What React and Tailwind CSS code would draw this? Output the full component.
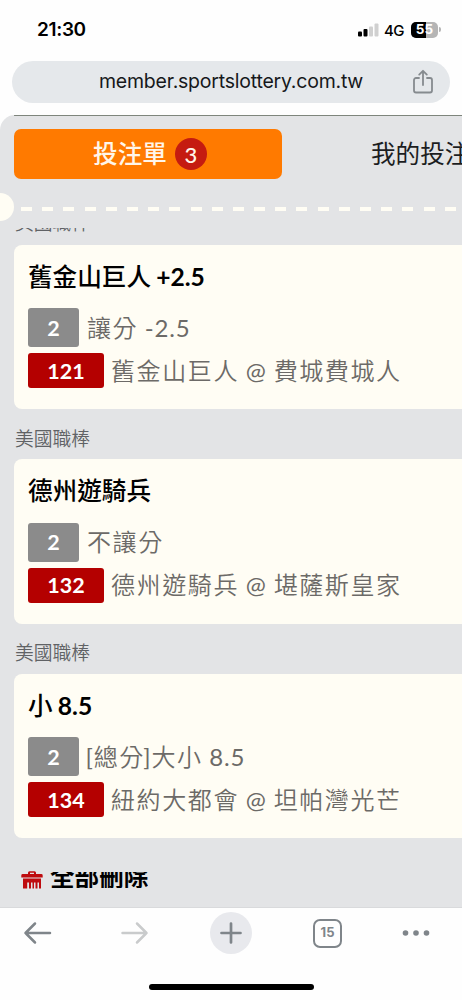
const bets = [
    { league: "美國職棒", title: "舊金山巨人 +2.5", type: "讓分 -2.5", code: "121", match: "舊金山巨人 @ 費城費城人" },
    { league: "美國職棒", title: "德州遊騎兵", type: "不讓分", code: "132", match: "德州遊騎兵 @ 堪薩斯皇家" },
    { league: "美國職棒", title: "小 8.5", type: "[總分]大小 8.5", code: "134", match: "紐約大都會 @ 坦帕灣光芒" },
];

// Latin runs take their own weight, the Chinese keeps the parent's
const MixedText = ({ text, latin }) =>
    text.split(/([\x21-\x7e]+)/).map((part, i) =>
        i % 2 ? (
            <span key={i} className={latin}>
                {part}
            </span>
        ) : (
            part
        )
    );

const StatusBar = () => (
    <div className="h-[61px] flex justify-between pl-[37px] pr-[21px] shrink-0 font-['Inter',sans-serif] text-black">
        <div className="mt-[17px] text-[19px] leading-[26px] font-semibold tracking-[-0.35px]">21:30</div>
        <div className="mt-[17px] h-[26px] flex items-center">
            <svg width="21" height="14" viewBox="0 0 21 14" className="-mt-px">
                <rect x="0" y="8.5" width="4" height="5" rx="1" fill="#000" />
                <rect x="5.500" y="6" width="4" height="7.500" rx="1" fill="#000" />
                <rect x="11" y="3.500" width="4" height="10" rx="1" fill="#d0d0d0" />
                <rect x="16.500" y="0.500" width="4" height="13" rx="1" fill="#d0d0d0" />
            </svg>
            <span className="ml-[5px] w-[21px] text-[15px] leading-none tracking-[-0.5px] font-medium">4G</span>
            <div className="relative ml-[6px] w-[27px] h-[16px] -mt-px rounded-[5px] overflow-hidden bg-[#b5b5b5] flex items-center justify-center">
                <div className="absolute left-0 top-0 w-[15px] h-full bg-black" />
                <span className="relative text-[13.5px] leading-none font-bold text-white">55</span>
            </div>
            <div className="ml-px -mt-px w-[2px] h-[5px] rounded-r-full bg-[#b5b5b5]" />
        </div>
    </div>
);

const AddressBar = () => (
    <div className="mx-3 h-[42px] shrink-0 rounded-full bg-[#e5e8eb] flex items-center pl-[87px] pr-[16px] justify-between">
        <span className="font-['Inter',sans-serif] text-[19.5px] tracking-[-0.22px] leading-none text-[#16181b] whitespace-nowrap">
            member.sportslottery.com.tw
        </span>
        <svg width="22" height="26" viewBox="0 0 22 26" fill="none" stroke="#868b8f" strokeWidth="1.8" strokeLinecap="round" strokeLinejoin="round">
            <path d="M7 9H4a2 2 0 0 0-2 2v10.500a2 2 0 0 0 2 2h14a2 2 0 0 0 2-2V11a2 2 0 0 0-2-2h-3" />
            <path d="M11 16V2.200M7.200 5.600L11 1.800l3.800 3.800" />
        </svg>
    </div>
);

const BetCard = ({ bet }) => (
    <>
        <div className="h-[49.7px] pt-[19.5px] first:pt-[17.5px] pl-px text-[18.8px] leading-[20px] text-[#606265] whitespace-nowrap font-[350]">{bet.league}</div>
        <div className="h-[164.8px] rounded-l-[8px] bg-[#fffdf4] pl-[14px] whitespace-nowrap">
            <div className="pt-[16px] h-[63px] text-[24.6px] leading-[32px] font-medium text-black">
                <MixedText text={bet.title} latin="font-bold -ml-px" />
            </div>
            <div className="flex items-center h-[40px]">
                <span className="w-[51px] h-[39px] rounded-[3px] bg-[#8b8b8b] text-white text-[21.5px] font-bold flex items-center justify-center">2</span>
                <span className="ml-[8px] text-[24px] tracking-[1.6px] leading-none font-[350] text-[#6c6a67]">
                    <MixedText text={bet.type} latin="font-normal tracking-[0.8px] -ml-[1.5px]" />
                </span>
            </div>
            <div className="flex items-center mt-[5px] h-[36px]">
                <span className="w-[76px] h-[35px] rounded-[3px] bg-[#b40000] text-white text-[21.5px] font-bold flex items-center justify-center">{bet.code}</span>
                <span className="ml-[7px] text-[24px] tracking-[1.6px] leading-none font-[350] text-[#6c6a67]">
                    <MixedText text={bet.match} latin="font-normal tracking-[-0.2px] -ml-[1.5px]" />
                </span>
            </div>
        </div>
    </>
);

const BetSlip = () => (
    <main className="h-[792px] shrink-0 overflow-hidden rounded-tl-[15px] bg-[#e3e4e6] flex flex-col font-['Lato','Noto_Sans_CJK_TC',sans-serif]">
        <div className="h-px shrink-0 ml-[14px] bg-[#7e857c]" />
        <div className="flex mt-[13px] ml-[14px] h-[50px] shrink-0 whitespace-nowrap text-[24.6px]">
            <div className="w-[268px] shrink-0 rounded-[7px] bg-[#ff7a00] flex items-center justify-center font-medium text-[#fff6ea]">
                <span className="leading-none">投注單</span>
                <span className="ml-[8px] mr-[-4px] w-[32px] h-[32px] rounded-full bg-[#c51b10] text-[22px] flex items-center justify-center">3</span>
            </div>
            <div className="ml-[89px] flex items-center text-[#1c1d1f]">我的投注</div>
        </div>
        {/* perforated edge of the ticket */}
        <div className="flex items-center h-[28px] mt-[14px] shrink-0">
            <div className="w-[14px] h-[28px] shrink-0 rounded-r-full bg-[#fffdf4]" />
            <div className="ml-[7px] mt-[4px] flex gap-[10.2px] overflow-hidden">
                {Array.from({ length: 21 }, (_, i) => (
                    <div key={i} className="w-[11px] h-[4px] shrink-0 bg-[#fffdf4]" />
                ))}
            </div>
        </div>
        <div className="mt-[7px] h-[680px] shrink-0 overflow-hidden pl-[14px]">
            <div className="-mt-[33px]">
                {bets.map((bet) => (
                    <BetCard key={bet.code} bet={bet} />
                ))}
            </div>
            <div className="mt-[32px] ml-[7px] flex items-start">
                <svg width="22" height="18" viewBox="0 0 22 18" fill="#be0b0f" className="mt-px">
                    <path fillRule="evenodd" d="M7 3V1.800Q7 .3 8.500 .3h5Q15 .3 15 1.800V3h5.300Q21.700 3 21.700 4.400V6.400H.3V4.400Q.3 3 1.700 3ZM9 3h4V1.800H9Z" />
                    <path d="M2 7.600h18v10h-2v-6h-1.500v6h-2v-6H13v6h-1.500v-6H10v6H8v-6H6.200v6H2Z" />
                </svg>
                <div className="ml-[7px] mt-[2px] h-[16px] overflow-hidden">
                    <div className="-mt-[3px] text-[24.6px] leading-[16px] font-bold text-black">全部刪除</div>
                </div>
            </div>
        </div>
    </main>
);

const BottomBar = () => (
    <footer className="flex-1 border-t border-[#d9dadc] flex flex-col items-center">
        <div className="w-full h-[50px] flex items-center pl-[23px] pr-[32px] shrink-0">
            <svg width="30" height="24" viewBox="0 0 30 24" fill="none" stroke="#7f858a" strokeWidth="2.5" strokeLinecap="round" strokeLinejoin="round">
                <path d="M12 2.500L2.500 12l9.500 9.500M2.500 12H27" />
            </svg>
            <svg className="ml-[67px]" width="30" height="24" viewBox="0 0 30 24" fill="none" stroke="#c9cbcc" strokeWidth="2.5" strokeLinecap="round" strokeLinejoin="round">
                <path d="M17 2.500l9.500 9.500-9.500 9.500M26.500 12H2.500" />
            </svg>
            <div className="ml-[60px] w-[42px] h-[42px] rounded-full bg-[#e8e9ed] flex items-center justify-center">
                <svg width="24" height="24" viewBox="0 0 24 24" stroke="#7f858a" strokeWidth="2.7" strokeLinecap="round">
                    <path d="M12 2.500v19M2.500 12h19" />
                </svg>
            </div>
            <div className="ml-[61px] w-[29px] h-[29px] rounded-[7px] border-2 border-[#7f858a] flex items-center justify-center font-['Inter',sans-serif] text-[13px] font-bold text-[#7f858a]">
                15
            </div>
            <svg className="ml-auto" width="28" height="6" viewBox="0 0 28 6" fill="#7f858a">
                <circle cx="3.500" cy="3" r="2.800" />
                <circle cx="14" cy="3" r="2.800" />
                <circle cx="24.500" cy="3" r="2.800" />
            </svg>
        </div>
        <div className="mt-[26px] w-[165px] h-[6px] rounded-full bg-black" />
    </footer>
);

const App = () => {
    return (
        <div className="w-full h-[1000px] overflow-hidden bg-[#fefefe] flex flex-col">
            <StatusBar />
            <AddressBar />
            <div className="h-[12px] shrink-0" />
            <BetSlip />
            <BottomBar />
        </div>
    );
};

export default App;
